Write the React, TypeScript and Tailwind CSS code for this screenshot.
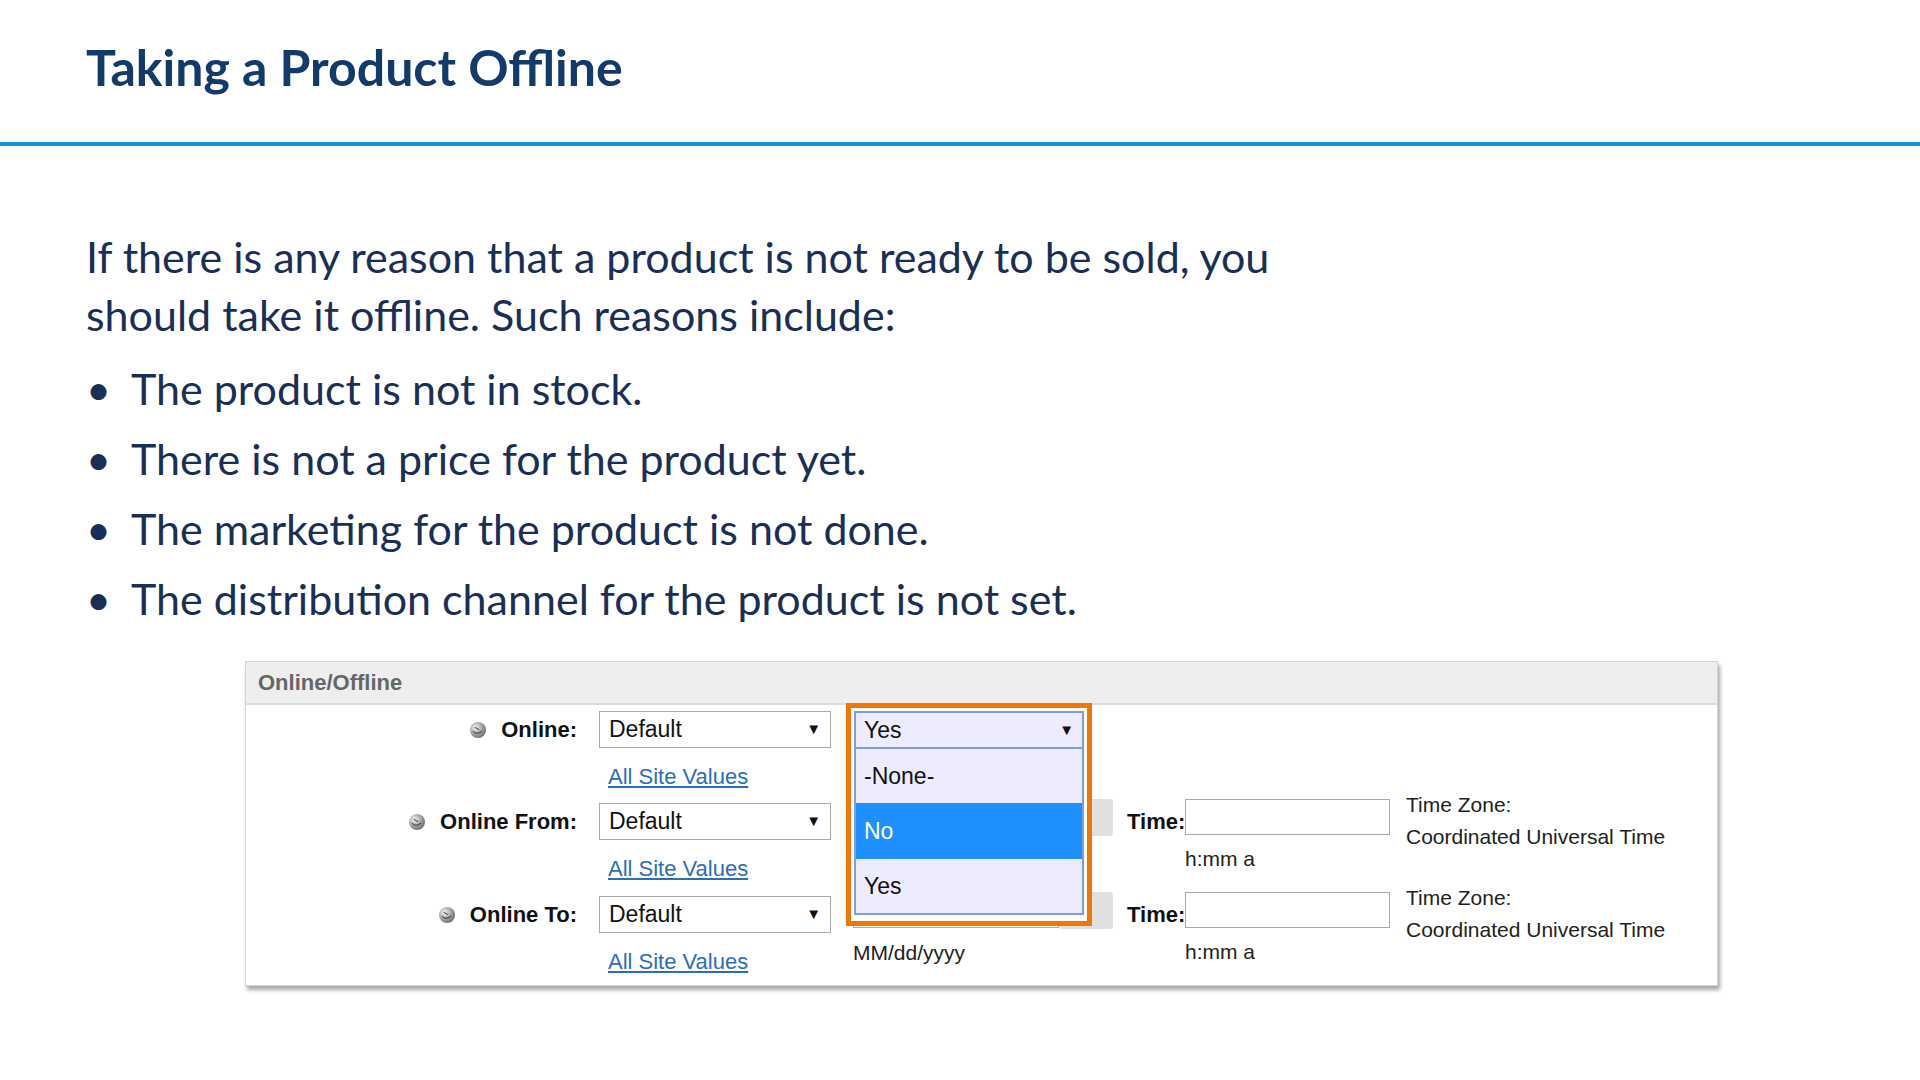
import React from "react";

const Globe = () => (
  <svg width="18" height="18" viewBox="0 0 18 18" className="mr-[14px]">
    <defs>
      <radialGradient id="g" cx="35%" cy="35%" r="70%">
        <stop offset="0%" stopColor="#f4f4f4" />
        <stop offset="100%" stopColor="#6b6b6b" />
      </radialGradient>
    </defs>
    <circle cx="9" cy="9" r="8" fill="url(#g)" />
    <path d="M4 10c2 3 6 3 9 0M6 6c1 2 3 1 4 3" stroke="#555" strokeWidth="1.3" fill="none" />
  </svg>
);

const Select = ({ v }: { v: string }) => (
  <div className="w-[232px] h-[37px] border border-[#a9a9a9] bg-white flex items-center justify-between px-[9px] text-[23px] text-[#111]">
    <span>{v}</span>
    <span className="text-[15px]">▼</span>
  </div>
);

const Link = () => (
  <div className="mt-[12px] ml-[9px] text-[22px] text-[#2a6fb8] underline">All Site Values</div>
);

const Label = ({ t }: { t: string }) => (
  <div className="w-[331px] h-[37px] flex items-center justify-end font-bold text-[22px] text-[#111]">
    <Globe />
    {t}
  </div>
);

const Extra = ({ hideInput }: { hideInput?: boolean }) => (
  <div className="flex ml-[22px] mt-[-4px]">
    <div className="flex flex-col">
      <div className="flex">
        <div className={`w-[206px] h-[36px] border border-[#a9a9a9] bg-white ${hideInput ? "" : ""}`} />
        <div className="w-[54px] h-[37px] bg-[#e0e0e0] rounded-[3px]" />
      </div>
      <div className="mt-[8px] text-[21px] text-[#222]">MM/dd/yyyy</div>
    </div>
    <div className="ml-[14px] mt-[6px] font-bold text-[22px] text-[#111] w-[58px]">Time:</div>
    <div className="flex flex-col">
      <div className="w-[205px] h-[36px] border border-[#a9a9a9] bg-white" />
      <div className="mt-[8px] text-[21px] text-[#222]">h:mm a</div>
    </div>
    <div className="ml-[16px] text-[21px] leading-[32px] text-[#222] mt-[-10px]">
      <div>Time Zone:</div>
      <div>Coordinated Universal Time</div>
    </div>
  </div>
);

export default function App() {
  const bullets = [
    "The product is not in stock.",
    "There is not a price for the product yet.",
    "The marketing for the product is not done.",
    "The distribution channel for the product is not set.",
  ];
  return (
    <div className="w-[1920px] h-[1080px] bg-white relative overflow-hidden" style={{ fontFamily: "Lato, 'Open Sans', sans-serif" }}>
      <div className="h-[142px] flex items-center pl-[86px] pb-[8px]">
        <h1 className="text-[50px] font-bold text-[#123a6b]">Taking a Product Offline</h1>
      </div>
      <div className="h-[4px] bg-[#1a90d8]" />
      <div className="pl-[86px] pt-[82px] text-[43px] text-[#1a2f55]">
        <p className="leading-[58px] w-[1300px]">
          If there is any reason that a product is not ready to be sold, you
          <br />
          should take it offline. Such reasons include:
        </p>
        <ul className="mt-[10px]">
          {bullets.map((b) => (
            <li key={b} className="flex h-[70px] items-center">
              <span className="w-[45px]">•</span>
              {b}
            </li>
          ))}
        </ul>
      </div>

      <div
        className="absolute left-[245px] top-[661px] w-[1473px] h-[325px] bg-white border border-[#d6d6d6] shadow-[2px_4px_4px_rgba(0,0,0,0.35)]"
        style={{ fontFamily: "'Liberation Sans', Arial, sans-serif" }}
      >
        <div className="h-[43px] bg-[#eeeeee] border-b-2 border-[#dcdcdc] flex items-center pl-[12px] text-[22px] font-bold text-[#666]">
          Online/Offline
        </div>
        <div className="pt-[6px] flex flex-col">
          <div className="flex h-[92px]">
            <Label t="Online:" />
            <div className="ml-[22px]">
              <Select v="Default" />
              <Link />
            </div>
          </div>
          <div className="flex h-[93px]">
            <Label t="Online From:" />
            <div className="ml-[22px]">
              <Select v="Default" />
              <Link />
            </div>
            <Extra />
          </div>
          <div className="flex h-[92px]">
            <Label t="Online To:" />
            <div className="ml-[22px]">
              <Select v="Default" />
              <Link />
            </div>
            <Extra />
          </div>
        </div>

        <div className="absolute left-[600px] top-[41px] w-[246px] h-[223px] border-[5px] border-[#f07800] bg-white p-[3px] pt-[3px]" style={{ fontFamily: "'Liberation Sans', Arial, sans-serif" }}>
          <div className="h-[38px] border-2 border-[#7a9ee0] bg-[#ececfc] flex items-center justify-between px-[8px] text-[23px] text-[#111]">
            <span>Yes</span>
            <span className="text-[15px]">▼</span>
          </div>
          <div className="border-x-2 border-b-2 border-[#7a9ee0] bg-[#ececfc]">
            <div className="h-[54px] flex items-center px-[8px] text-[23px] text-[#111]">-None-</div>
            <div className="h-[56px] flex items-center px-[8px] text-[23px] text-white bg-[#1e90ff]">No</div>
            <div className="h-[54px] flex items-center px-[8px] text-[23px] text-[#111]">Yes</div>
          </div>
        </div>
      </div>
    </div>
  );
}
